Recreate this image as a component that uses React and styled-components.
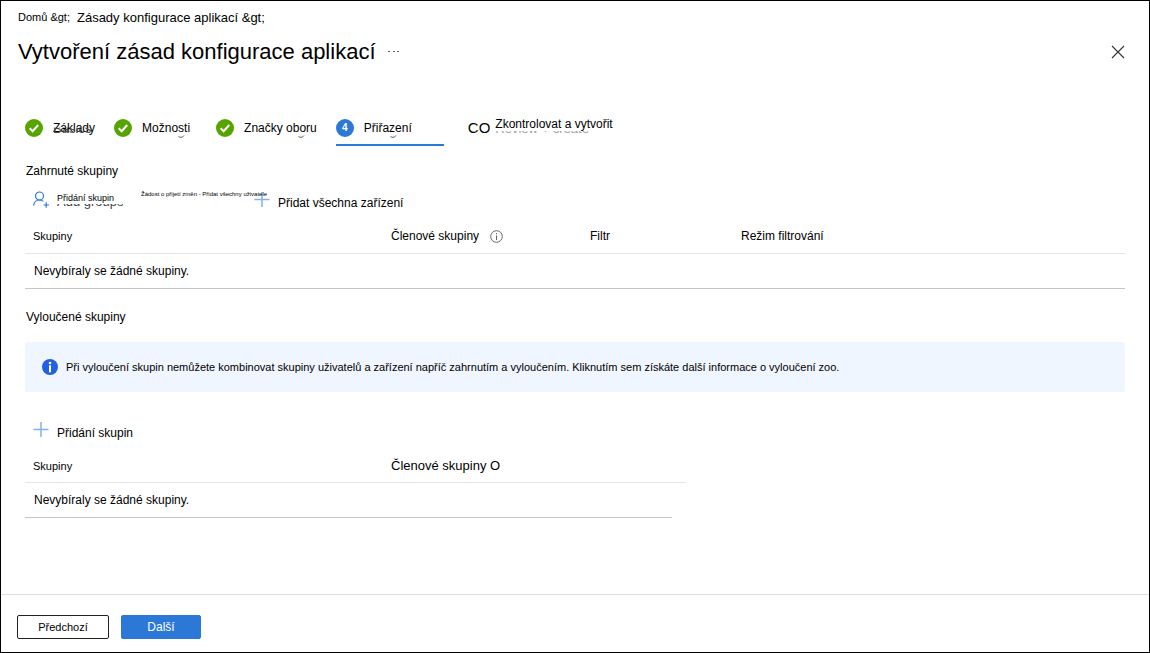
import React from 'react';

import styled, { createGlobalStyle } from 'styled-components';

const GlobalStyle = createGlobalStyle`
  * {
    box-sizing: border-box;
  }

  body {
    margin: 0;
    background: #ffffff;
    color: #000000;
    font: 12px/16px 'Liberation Sans', Arial, sans-serif;
  }

  button {
    padding: 0;
    border: 0;
    background: none;
    color: inherit;
    font: inherit;
    white-space: nowrap;
    cursor: pointer;
  }
`;

const Page = styled.div`
  display: flex;
  flex-direction: column;
  min-height: 100vh;
  border: 1px solid #000000;
`;

const Header = styled.header`
  padding: 9px 24px 0 17px;
`;

const Breadcrumb = styled.nav`
  display: flex;
  align-items: flex-start;
  gap: 7px;
`;

const Crumb = styled.a`
  color: inherit;
  font-size: ${props => (props.$small ? 11 : 13)}px;
  line-height: ${props => (props.$small ? 14 : 16)}px;
  text-decoration: none;
`;

const TitleRow = styled.div`
  display: flex;
  align-items: center;
  gap: 11px;
  margin-top: 11px;
`;

const Title = styled.h1`
  margin: 0;
  font-size: 22px;
  line-height: 30px;
  font-weight: 400;
`;

const IconButton = styled.button`
  display: flex;
  margin-left: ${props => (props.$end ? 'auto' : 0)};
`;

const Main = styled.main`
  flex: 1;
  padding: 44px 24px 0;
`;

const Steps = styled.ol`
  display: flex;
  margin: 0;
  padding: 0;
  list-style: none;
`;

const StepItem = styled.li`
  margin-right: ${props => props.$after}px;
  padding-right: ${props => (props.$current ? 32 : 0)}px;
  border-bottom: 2px solid
    ${props => (props.$current ? '#2b78d7' : 'transparent')};
`;

const StepButton = styled.button`
  display: flex;
  align-items: center;
  gap: ${props => props.$gap || 10}px;
  height: 33px;
`;

const StepNumber = styled.span`
  width: 18px;
  border-radius: 50%;
  background: #2b78d7;
  color: #ffffff;
  font-size: 10px;
  line-height: 18px;
  font-weight: 700;
  text-align: center;
`;

const StepMark = styled.span`
  font-size: 15px;
`;

const Label = styled.span`
  position: relative;
  align-self: ${props => props.$align || 'center'};
  font-size: ${props => props.$size || 12}px;
  line-height: ${props => props.$line || 16}px;
`;

// Lower edge of the text that shows under a label
const Under = styled.span`
  position: absolute;
  left: 0;
  top: ${props => props.$top}px;
  color: ${props => props.$color || '#444444'};
  font-size: 13px;
  line-height: 16px;
  white-space: nowrap;
  clip-path: inset(${props => props.$hide}px 0 0 0);
  pointer-events: none;
`;

const TailSvg = styled.svg`
  position: absolute;
  left: ${props => props.$left}px;
  bottom: -2px;
`;

const SectionTitle = styled.h2`
  margin: ${props => props.$top}px 1px 0;
  font-size: 12px;
  line-height: 16px;
  font-weight: 400;
`;

const Toolbar = styled.div`
  display: flex;
  height: 20px;
  margin: ${props => props.$top}px 0 9px;
  padding-left: 8px;
`;

const Command = styled.button`
  display: flex;
  gap: 8px;
  width: ${props => (props.$width ? `${props.$width}px` : 'auto')};
  align-items: flex-start;
`;

const Table = styled.table`
  width: ${props => (props.$width ? `${props.$width}px` : '100%')};
  max-width: 100%;
  border-collapse: collapse;
  table-layout: fixed;
`;

const Col = styled.col`
  width: ${props => (props.$width ? `${props.$width}px` : 'auto')};
`;

const Th = styled.th`
  height: 33px;
  padding: 0 8px;
  border-bottom: 1px solid #e6e6e6;
  font-size: ${props => props.$size || 12}px;
  font-weight: 400;
  text-align: left;
  white-space: nowrap;
`;

const ThInner = styled.span`
  display: flex;
  align-items: center;
  gap: 11px;
`;

const Td = styled.td`
  height: 35px;
  padding: 0 9px;
  border-bottom: 1px solid #c4c4c4;
`;

const Banner = styled.div`
  display: flex;
  align-items: center;
  gap: 8px;
  min-height: 50px;
  margin-top: 17px;
  padding: 0 17px;
  border-radius: 2px;
  background: #f0f6ff;
`;

const Footer = styled.footer`
  display: flex;
  gap: 12px;
  padding: 20px 16px 13px;
  border-top: 1px solid #dedede;
`;

const FooterButton = styled.button`
  width: ${props => (props.$primary ? 80 : 92)}px;
  height: 24px;
  border: 1px solid ${props => (props.$primary ? '#2b78d7' : '#222222')};
  border-radius: 2px;
  background: ${props => (props.$primary ? '#2b78d7' : '#ffffff')};
  color: ${props => (props.$primary ? '#ffffff' : '#000000')};
  font-size: ${props => (props.$primary ? 12 : 11)}px;
`;

const CheckIcon = () => (
  <svg width={18} height={18} fill="none" aria-hidden="true">
    <circle cx={9} cy={9} r={9} fill="#57a300" />
    <path d="M4.7 9.2 7.7 12.2 13.2 6" stroke="#ffffff" strokeWidth={2} />
  </svg>
);

const PlusIcon = () => (
  <svg width={16} height={17} stroke="#84b1ea" strokeWidth={1.5} aria-hidden="true">
    <path d="M0.5 8.5H15.5M8 1V16" />
  </svg>
);

const AddUserIcon = () => (
  <svg width={16} height={17} fill="none" stroke="#2b78d7" strokeWidth={1.2} aria-hidden="true">
    <circle cx={6.5} cy={5} r={4} />
    <path d="M0.7 14.5C0.9 11.2 3.4 9 6.5 9C8 9 9.3 9.5 10.3 10.4" />
    <path d="M10.5 14H16M13.2 11.2V16.8" />
  </svg>
);

const MoreIcon = () => (
  <svg width={14} height={4} fill="#666666" aria-hidden="true">
    <rect x={1} y={1} width={2} height={1} />
    <rect x={6} y={1} width={2} height={1} />
    <rect x={10} y={1} width={2} height={1} />
  </svg>
);

const CloseIcon = () => (
  <svg width={14} height={14} stroke="#333333" strokeWidth={1.1} aria-hidden="true">
    <path d="M1 1 13 13M13 1 1 13" />
  </svg>
);

const InfoIcon = () => (
  <svg width={13} height={13} fill="none" stroke="#666666" aria-hidden="true">
    <circle cx={6.5} cy={6.5} r={5.8} />
    <path d="M6.5 5.5V10M6.5 3V4.3" />
  </svg>
);

const InfoFilledIcon = () => (
  <svg width={16} height={16} fill="#ffffff" aria-hidden="true">
    <circle cx={8} cy={8} r={8} fill="#2160e0" />
    <circle cx={8} cy={4} r={1.3} />
    <rect x={7} y={6.3} width={2} height={7} />
  </svg>
);

const Tail = ({ left }) => (
  <TailSvg $left={left} width={7} height={3} fill="none" stroke="#555555" aria-hidden="true">
    <path d="M0.5 1.5C2 2.8 4.5 2.8 6 0.5" />
  </TailSvg>
);

const App = () => (
  <>
    <GlobalStyle />
    <Page>
      <Header>
        <Breadcrumb>
          <Crumb href="#home" $small>Domů &amp;gt;</Crumb>
          <Crumb href="#policies">Zásady konfigurace aplikací &amp;gt;</Crumb>
        </Breadcrumb>
        <TitleRow>
          <Title>Vytvoření zásad konfigurace aplikací</Title>
          <IconButton aria-label="Další akce"><MoreIcon /></IconButton>
          <IconButton aria-label="Zavřít" $end><CloseIcon /></IconButton>
        </TitleRow>
      </Header>

      <Main>
        <Steps>
          <StepItem $after={19}>
            <StepButton>
              <CheckIcon />
              <Label>
                Základy
                <Under $top={1} $hide={7} aria-hidden="true">Basics</Under>
              </Label>
            </StepButton>
          </StepItem>
          <StepItem $after={26}>
            <StepButton>
              <CheckIcon />
              <Label>
                Možnosti
                <Tail left={36} />
              </Label>
            </StepButton>
          </StepItem>
          <StepItem $after={19}>
            <StepButton>
              <CheckIcon />
              <Label>
                Značky oboru
                <Tail left={54} />
              </Label>
            </StepButton>
          </StepItem>
          <StepItem $after={24} $current>
            <StepButton aria-current="step">
              <StepNumber>4</StepNumber>
              <Label>
                Přiřazení
                <Tail left={26} />
              </Label>
            </StepButton>
          </StepItem>
          <StepItem $after={0}>
            <StepButton $gap={5}>
              <StepMark>CO</StepMark>
              <Label $align="flex-start" $line={26}>
                Zkontrolovat a vytvořit
                <Under $top={10} $hide={10} $color="#a0a0a0" aria-hidden="true">
                  Review + create
                </Under>
              </Label>
            </StepButton>
          </StepItem>
        </Steps>

        <SectionTitle $top={17}>Zahrnuté skupiny</SectionTitle>
        <Toolbar $top={12}>
          <Command $width={108}>
            <AddUserIcon />
            <Label $size={9} $line={14} $align="flex-start">
              Přidání skupin
              <Under $top={3} $hide={10} aria-hidden="true">Add groups</Under>
            </Label>
          </Command>
          <Command $width={113}>
            <Label $size={6} $line={6} $align="flex-start">
              Žádost o přijetí změn - Přidat všechny uživatele
            </Label>
          </Command>
          <Command>
            <PlusIcon />
            <Label $align="flex-end">Přidat všechna zařízení</Label>
          </Command>
        </Toolbar>
        <Table>
          <colgroup>
            <Col $width={358} />
            <Col $width={199} />
            <Col $width={151} />
            <Col />
          </colgroup>
          <thead>
            <tr>
              <Th scope="col" $size={11}>Skupiny</Th>
              <Th scope="col">
                <ThInner>
                  Členové skupiny
                  <InfoIcon />
                </ThInner>
              </Th>
              <Th scope="col">Filtr</Th>
              <Th scope="col">Režim filtrování</Th>
            </tr>
          </thead>
          <tbody>
            <tr>
              <Td colSpan={4}>Nevybíraly se žádné skupiny.</Td>
            </tr>
          </tbody>
        </Table>

        <SectionTitle $top={20}>Vyloučené skupiny</SectionTitle>
        <Banner role="note">
          <InfoFilledIcon />
          <Label $size={11}>
            Při vyloučení skupin nemůžete kombinovat skupiny uživatelů a zařízení napříč
            zahrnutím a vyloučením. Kliknutím sem získáte další informace o vyloučení zoo.
          </Label>
        </Banner>
        <Toolbar $top={29}>
          <Command>
            <PlusIcon />
            <Label $align="flex-end">Přidání skupin</Label>
          </Command>
        </Toolbar>
        <Table $width={661}>
          <colgroup>
            <Col $width={358} />
            <Col />
            <Col $width={14} />
          </colgroup>
          <thead>
            <tr>
              <Th scope="col" $size={11}>Skupiny</Th>
              <Th scope="col" colSpan={2} $size={13}>Členové skupiny O</Th>
            </tr>
          </thead>
          <tbody>
            <tr>
              <Td colSpan={2}>Nevybíraly se žádné skupiny.</Td>
            </tr>
          </tbody>
        </Table>
      </Main>

      <Footer>
        <FooterButton>Předchozí</FooterButton>
        <FooterButton $primary>Další</FooterButton>
      </Footer>
    </Page>
  </>
);

export default App;
